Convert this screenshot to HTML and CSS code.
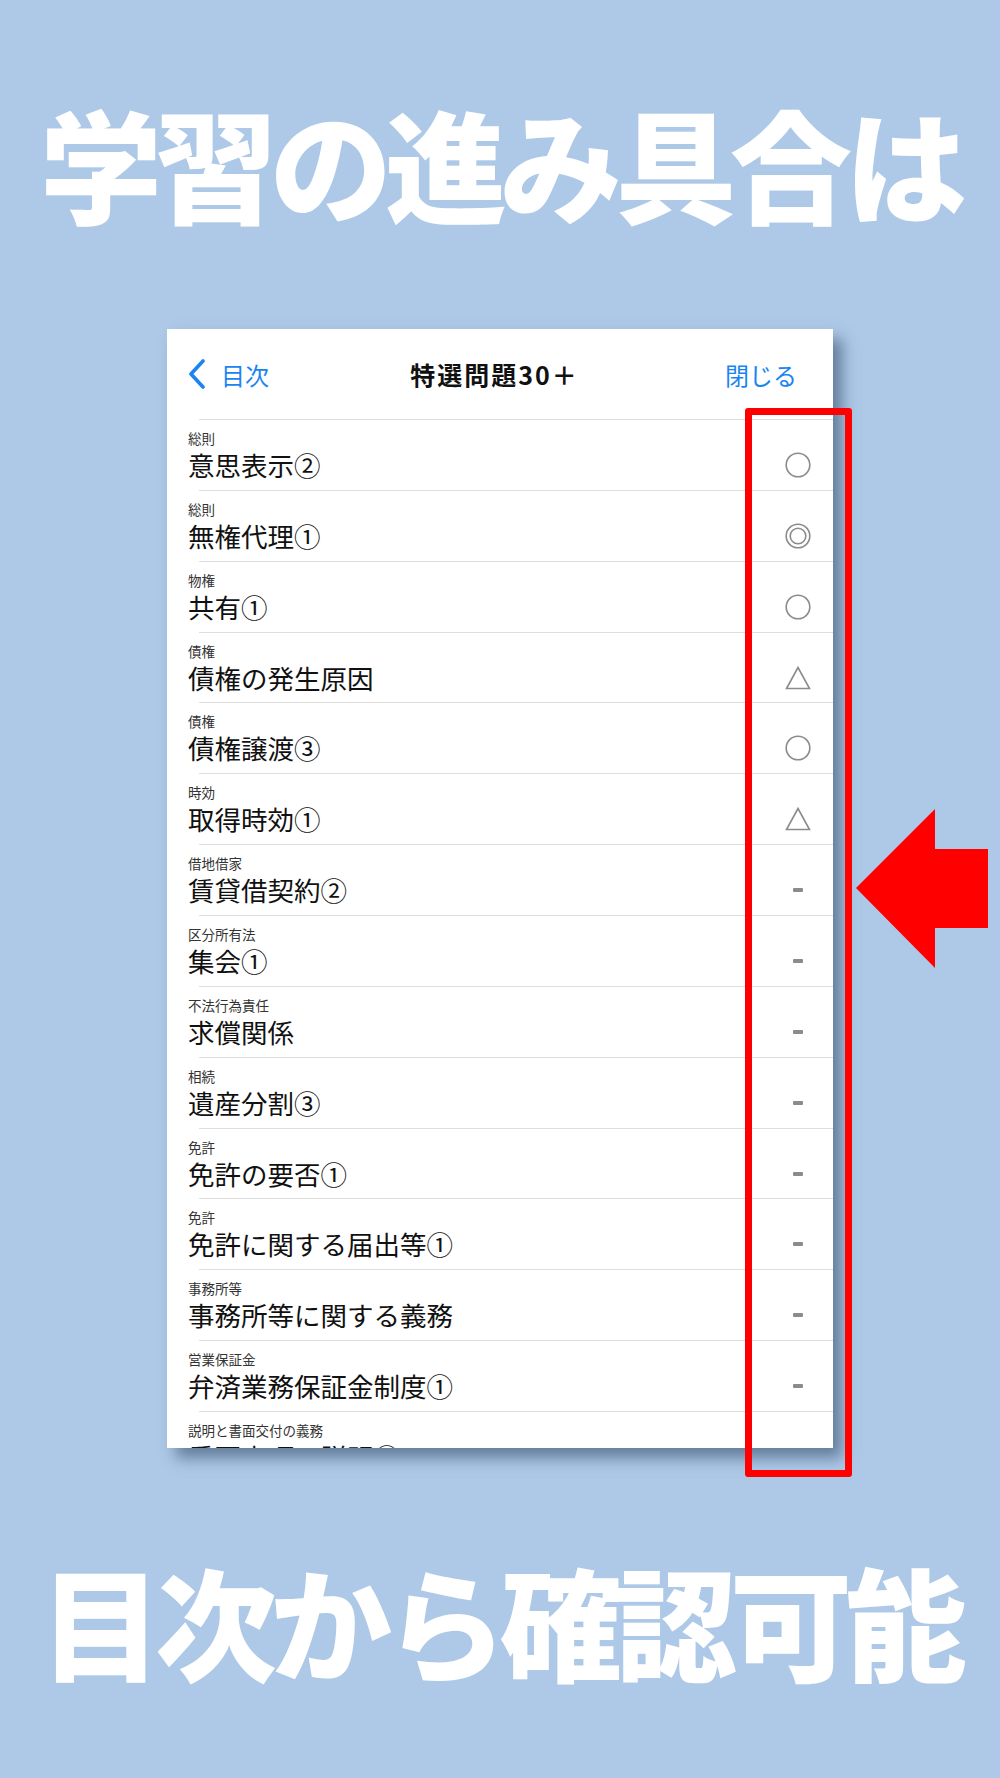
FILE: index.html
```html
<!DOCTYPE html>
<html lang="ja">
<head>
    <meta charset="UTF-8">
    <meta name="viewport" content="width=device-width, initial-scale=1.0">
    <title>学習の進み具合は目次から確認可能</title>
    <link rel="stylesheet" href="styles.css">
</head>
<body>
    <main class="page">
        <h1 class="headline">学習の進み具合は</h1>

        <div class="stage">
            <div class="card">
                <header class="nav">
                    <a class="nav-back">
                        <svg width="18" height="30" viewBox="0 0 18 30">
                            <path d="M15 2 L3 15 L15 28" fill="none" stroke="#1a84f2" stroke-width="3.6" stroke-linecap="round" stroke-linejoin="round"/>
                        </svg>
                        <span>目次</span>
                    </a>
                    <div class="nav-title">特選問題30＋</div>
                    <a class="nav-close">閉じる</a>
                </header>

                <ul class="toc">
                    <li class="item">
                        <div class="cat">総則</div>
                        <div class="line"><span class="name">意思表示②</span><span class="mark"><svg width="26" height="26" viewBox="0 0 26 26"><circle cx="13" cy="13" r="11.8" fill="none" stroke="#8b8b8b" stroke-width="1.6"/></svg></span></div>
                    </li>
                    <li class="item">
                        <div class="cat">総則</div>
                        <div class="line"><span class="name">無権代理①</span><span class="mark"><svg width="26" height="26" viewBox="0 0 26 26"><circle cx="13" cy="13" r="11.8" fill="none" stroke="#8b8b8b" stroke-width="1.6"/><circle cx="13" cy="13" r="7.8" fill="none" stroke="#8b8b8b" stroke-width="1.6"/></svg></span></div>
                    </li>
                    <li class="item">
                        <div class="cat">物権</div>
                        <div class="line"><span class="name">共有①</span><span class="mark"><svg width="26" height="26" viewBox="0 0 26 26"><circle cx="13" cy="13" r="11.8" fill="none" stroke="#8b8b8b" stroke-width="1.6"/></svg></span></div>
                    </li>
                    <li class="item">
                        <div class="cat">債権</div>
                        <div class="line"><span class="name">債権の発生原因</span><span class="mark"><svg width="26" height="26" viewBox="0 0 26 26"><polygon points="1.5,23.5 13,2.5 24.5,23.5" fill="none" stroke="#8b8b8b" stroke-width="1.6" stroke-linejoin="miter"/></svg></span></div>
                    </li>
                    <li class="item">
                        <div class="cat">債権</div>
                        <div class="line"><span class="name">債権譲渡③</span><span class="mark"><svg width="26" height="26" viewBox="0 0 26 26"><circle cx="13" cy="13" r="11.8" fill="none" stroke="#8b8b8b" stroke-width="1.6"/></svg></span></div>
                    </li>
                    <li class="item">
                        <div class="cat">時効</div>
                        <div class="line"><span class="name">取得時効①</span><span class="mark"><svg width="26" height="26" viewBox="0 0 26 26"><polygon points="1.5,23.5 13,2.5 24.5,23.5" fill="none" stroke="#8b8b8b" stroke-width="1.6" stroke-linejoin="miter"/></svg></span></div>
                    </li>
                    <li class="item">
                        <div class="cat">借地借家</div>
                        <div class="line"><span class="name">賃貸借契約②</span><span class="mark"><i class="dash"></i></span></div>
                    </li>
                    <li class="item">
                        <div class="cat">区分所有法</div>
                        <div class="line"><span class="name">集会①</span><span class="mark"><i class="dash"></i></span></div>
                    </li>
                    <li class="item">
                        <div class="cat">不法行為責任</div>
                        <div class="line"><span class="name">求償関係</span><span class="mark"><i class="dash"></i></span></div>
                    </li>
                    <li class="item">
                        <div class="cat">相続</div>
                        <div class="line"><span class="name">遺産分割③</span><span class="mark"><i class="dash"></i></span></div>
                    </li>
                    <li class="item">
                        <div class="cat">免許</div>
                        <div class="line"><span class="name">免許の要否①</span><span class="mark"><i class="dash"></i></span></div>
                    </li>
                    <li class="item">
                        <div class="cat">免許</div>
                        <div class="line"><span class="name">免許に関する届出等①</span><span class="mark"><i class="dash"></i></span></div>
                    </li>
                    <li class="item">
                        <div class="cat">事務所等</div>
                        <div class="line"><span class="name">事務所等に関する義務</span><span class="mark"><i class="dash"></i></span></div>
                    </li>
                    <li class="item">
                        <div class="cat">営業保証金</div>
                        <div class="line"><span class="name">弁済業務保証金制度①</span><span class="mark"><i class="dash"></i></span></div>
                    </li>
                    <li class="item">
                        <div class="cat">説明と書面交付の義務</div>
                        <div class="line"><span class="name">重要事項の説明②</span><span class="mark"><i class="dash"></i></span></div>
                    </li>
                </ul>
            </div>

            <!-- highlight frame and arrow sit over the card -->
            <div class="highlight"></div>
            <svg class="arrow" width="134" height="162" viewBox="0 0 134 162">
                <polygon points="0,80 79,1 79,41 132,41 132,120 79,120 79,160" fill="#ff0000"/>
            </svg>
        </div>

        <p class="headline bottom">目次から確認可能</p>
    </main>
</body>
</html>
```

FILE: styles.css
```css
body {
    margin: 0;
    background-color: #adc9e7;
    font-family: "Noto Sans CJK JP", "Noto Sans", sans-serif;
}

.page {
    width: 1000px;
    height: 1778px;
    overflow: hidden;
}

.headline {
    margin: 0;
    padding-top: 100px;
    height: 122px;
    font-size: 122px;
    line-height: 122px;
    font-weight: 900;
    color: #ffffff;
    text-align: center;
    letter-spacing: -7px;
    white-space: nowrap;
}

.headline.bottom {
    padding-top: 0;
    margin-top: 106px;
}

.stage {
    position: relative;
    margin-top: 107px;
    height: 1123px;
}

.card {
    margin-left: 167px;
    width: 666px;
    height: 1119px;
    background-color: #ffffff;
    overflow: hidden;
    box-shadow: 9px 10px 14px rgba(40, 62, 92, 0.55);
}

.nav {
    height: 90px;
    display: flex;
    align-items: center;
    justify-content: space-between;
    padding: 0 36px 0 21px;
    box-sizing: border-box;
    font-size: 24px;
}

.nav-back {
    display: flex;
    align-items: center;
    gap: 15px;
    color: #1a84f2;
    width: 150px;
}

.nav-title {
    font-weight: 700;
    font-size: 25px;
    letter-spacing: 2px;
    color: #111111;
    padding-left: 4px;
}

.nav-close {
    color: #1a84f2;
    width: 150px;
    text-align: right;
}

.toc {
    list-style: none;
    margin: 0;
    padding: 0;
}

.item {
    height: 70.86px;
    box-sizing: border-box;
    padding: 9px 22px 0 21px;
    background: linear-gradient(#dedede, #dedede) 32px 0 / calc(100% - 32px) 1px no-repeat;
}

.cat {
    font-size: 13.5px;
    line-height: 20px;
    color: #333333;
}

.line {
    display: flex;
    align-items: center;
    justify-content: space-between;
    height: 38px;
    margin-top: -2px;
}

.name {
    font-size: 26.5px;
    line-height: 38px;
    color: #111111;
    white-space: nowrap;
}

.mark {
    width: 26px;
    height: 26px;
    display: flex;
    align-items: center;
    justify-content: center;
}

.dash {
    display: block;
    width: 10px;
    height: 4px;
    border-radius: 1px;
    background-color: #8b8b8b;
}

.highlight {
    position: absolute;
    left: 745px;
    top: 79px;
    width: 107px;
    height: 1069px;
    box-sizing: border-box;
    border: 7px solid #ff0000;
    border-radius: 3px;
}

.arrow {
    position: absolute;
    left: 856px;
    top: 479px;
}
```
